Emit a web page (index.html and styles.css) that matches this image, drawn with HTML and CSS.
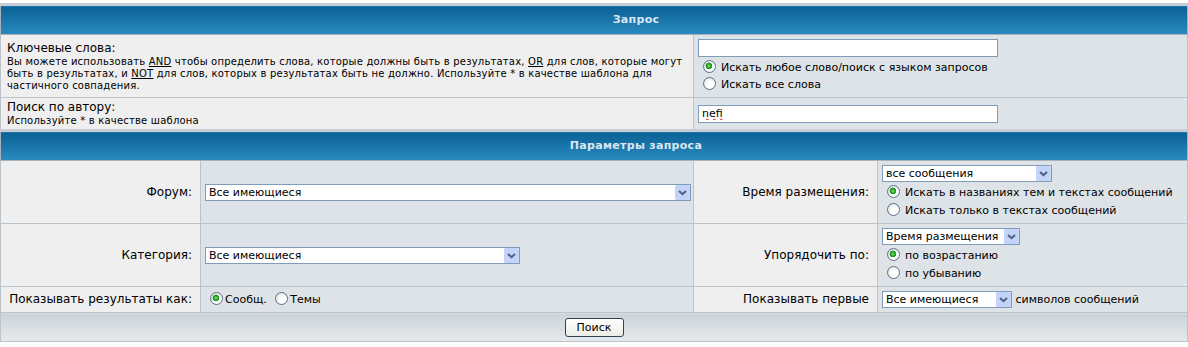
FILE: index.html
```html
<!DOCTYPE html>
<html>
<head>
    <title>Поиск</title>
    <link rel="stylesheet" href="styles.css">
</head>
<body>
    <form class="search-form">
        <table class="forumline">
            <colgroup>
                <col class="c1"><col class="c2"><col class="c3"><col class="c4">
            </colgroup>
            <tr class="head">
                <th colspan="4" class="thHead">Запрос</th>
            </tr>
            <tr class="r-keywords">
                <td colspan="2" class="row1 desc">
                    <div class="gen">Ключевые слова:</div>
                    <div class="gensmall">Вы можете использовать <u>AND</u> чтобы определить слова, которые должны быть в результатах, <u>OR</u> для слов, которые могут<br>быть в результатах, и <u>NOT</u> для слов, которых в результатах быть не должно. Используйте * в качестве шаблона для<br>частичного совпадения.</div>
                </td>
                <td colspan="2" class="row2 ctrl">
                    <input type="text" class="post wide" name="search_keywords">
                    <div class="opt"><label><input type="radio" name="search_terms" checked>Искать любое слово/поиск с языком запросов</label></div>
                    <div class="opt"><label><input type="radio" name="search_terms">Искать все слова</label></div>
                </td>
            </tr>
            <tr class="r-author">
                <td colspan="2" class="row1 desc">
                    <div class="gen">Поиск по автору:</div>
                    <div class="gensmall">Используйте * в качестве шаблона</div>
                </td>
                <td colspan="2" class="row2 ctrl">
                    <input type="text" class="post wide author" name="search_author" value="nefi">
                </td>
            </tr>
            <tr class="head">
                <th colspan="4" class="thHead">Параметры запроса</th>
            </tr>
            <tr class="r-big">
                <td class="row1 lbl">Форум:</td>
                <td class="row2 ctrl">
                    <span class="sel sel-forum">
                        <select name="search_forum"><option>Все имеющиеся</option></select>
                        <span class="sel-btn"><svg width="15" height="15" viewBox="0 0 15 15"><rect x="0" y="0" width="15" height="15" rx="1.5" fill="#c4d3f8"/><path d="M4 6l3.5 3.2L11 6" fill="none" stroke="#4a5f86" stroke-width="2"/></svg></span>
                    </span>
                </td>
                <td class="row1 lbl">Время размещения:</td>
                <td class="row2 ctrl stack">
                    <span class="sel sel-time">
                        <select name="search_time"><option>все сообщения</option></select>
                        <span class="sel-btn"><svg width="15" height="15" viewBox="0 0 15 15"><rect x="0" y="0" width="15" height="15" rx="1.5" fill="#c4d3f8"/><path d="M4 6l3.5 3.2L11 6" fill="none" stroke="#4a5f86" stroke-width="2"/></svg></span>
                    </span>
                    <div class="opt"><label><input type="radio" name="search_fields" checked>Искать в названиях тем и текстах сообщений</label></div>
                    <div class="opt"><label><input type="radio" name="search_fields">Искать только в текстах сообщений</label></div>
                </td>
            </tr>
            <tr class="r-big">
                <td class="row1 lbl">Категория:</td>
                <td class="row2 ctrl">
                    <span class="sel sel-cat">
                        <select name="search_cat"><option>Все имеющиеся</option></select>
                        <span class="sel-btn"><svg width="15" height="15" viewBox="0 0 15 15"><rect x="0" y="0" width="15" height="15" rx="1.5" fill="#c4d3f8"/><path d="M4 6l3.5 3.2L11 6" fill="none" stroke="#4a5f86" stroke-width="2"/></svg></span>
                    </span>
                </td>
                <td class="row1 lbl">Упорядочить по:</td>
                <td class="row2 ctrl stack">
                    <span class="sel sel-sort">
                        <select name="sort_by"><option>Время размещения</option></select>
                        <span class="sel-btn"><svg width="15" height="15" viewBox="0 0 15 15"><rect x="0" y="0" width="15" height="15" rx="1.5" fill="#c4d3f8"/><path d="M4 6l3.5 3.2L11 6" fill="none" stroke="#4a5f86" stroke-width="2"/></svg></span>
                    </span>
                    <div class="opt"><label><input type="radio" name="sort_dir" checked>по возрастанию</label></div>
                    <div class="opt"><label><input type="radio" name="sort_dir">по убыванию</label></div>
                </td>
            </tr>
            <tr class="r-small">
                <td class="row1 lbl">Показывать результаты как:</td>
                <td class="row2 ctrl inline">
                    <label><input type="radio" name="show_results" checked>Сообщ.</label>
                    <label><input type="radio" name="show_results">Темы</label>
                </td>
                <td class="row1 lbl">Показывать первые</td>
                <td class="row2 ctrl inline">
                    <span class="sel sel-chars">
                        <select name="return_chars"><option>Все имеющиеся</option></select>
                        <span class="sel-btn"><svg width="15" height="15" viewBox="0 0 15 15"><rect x="0" y="0" width="15" height="15" rx="1.5" fill="#c4d3f8"/><path d="M4 6l3.5 3.2L11 6" fill="none" stroke="#4a5f86" stroke-width="2"/></svg></span>
                    </span>
                    символов сообщений
                </td>
            </tr>
            <tr class="r-foot">
                <td colspan="4" class="catBottom">
                    <button type="submit" class="liteoption">Поиск</button>
                </td>
            </tr>
        </table>
    </form>
</body>
</html>
```

FILE: styles.css
```css
body {
    margin: 0;
    background: #fff;
    font-family: "DejaVu Sans", Verdana, sans-serif;
    color: #000;
}

.search-form {
    margin: 0;
}

.forumline {
    margin-top: 3px;
    width: 1187px;
    border-collapse: collapse;
    border: 1px solid #a9b1b9;
    table-layout: fixed;
}

col.c1 { width: 200px; }
col.c2 { width: 493px; }
col.c3 { width: 184px; }
col.c4 { width: 310px; }

.thHead {
    height: 28px;
    padding: 0 0 0 84px;
    font-size: 11px;
    line-height: 14px;
    font-weight: bold;
    letter-spacing: .3px;
    color: #dbe7f0;
    text-align: center;
    background: linear-gradient(#0a6195, #2a8bc0);
    border-top: 3px solid #c8ccd6;
    border-bottom: 1px solid #a9b1b9;
}

td {
    border: 1px solid #bcc4cb;
    padding: 0;
    vertical-align: middle;
    font-size: 11px;
    line-height: 17px;
}

.row1 { background: #efefef; }
.row2 { background: #dee3e7; }

.r-keywords { height: 63px; }
.r-author { height: 33px; }
.r-big { height: 63px; }
.r-small { height: 26px; }
.r-foot { height: 28px; }

.desc {
    padding: 0 6px;
}

.gen {
    font-size: 12px;
    line-height: 15px;
}

.gensmall {
    font-size: 10px;
    line-height: 12px;
    letter-spacing: .2px;
    white-space: nowrap;
}

.ctrl {
    padding: 0 4px;
}

.lbl {
    font-size: 12px;
    text-align: right;
    padding-right: 8px;
    white-space: nowrap;
}

.opt {
    line-height: 17px;
    height: 17px;
}

.stack .opt {
    height: 18px;
    line-height: 18px;
}

.post {
    box-sizing: border-box;
    height: 18px;
    border: 1px solid #7f9db9;
    background: #fff;
    font-family: "DejaVu Sans", Verdana, sans-serif;
    font-size: 11px;
    padding: 0 3px;
    margin: 0;
}

.wide {
    width: 300px;
    display: block;
    margin-bottom: 2px;
}

.author {
    margin-bottom: 0;
    text-decoration: underline wavy #e02020;
    text-decoration-thickness: 1px;
}

input[type="radio"] {
    appearance: none;
    -webkit-appearance: none;
    box-sizing: border-box;
    width: 13px;
    height: 13px;
    margin: 0 5px 0 5px;
    border: 1px solid #5b6f88;
    border-radius: 50%;
    background: radial-gradient(circle at 65% 65%, #ffffff 35%, #d6d6cf 100%);
    vertical-align: -2px;
}

input[type="radio"]:checked {
    background:
        radial-gradient(circle at 45% 45%, #7be06a 0, #25a625 2.2px, #1e8f1e 3.2px, transparent 3.6px),
        radial-gradient(circle at 65% 65%, #ffffff 35%, #d6d6cf 100%);
}

.inline input[type="radio"] {
    margin: 0 2px 0 5px;
}

.sel {
    position: relative;
    display: inline-block;
    vertical-align: middle;
}

.stack .sel {
    display: block;
    width: max-content;
    margin-bottom: 2px;
}

.sel select {
    appearance: none;
    -webkit-appearance: none;
    box-sizing: border-box;
    display: block;
    height: 17px;
    margin: 0;
    padding: 0 0 0 3px;
    border: 1px solid #7f9db9;
    border-radius: 0;
    background: #fff;
    font-family: "DejaVu Sans", Verdana, sans-serif;
    font-size: 11px;
    color: #000;
}

.sel-btn {
    position: absolute;
    right: 1px;
    top: 1px;
    width: 15px;
    height: 15px;
    pointer-events: none;
}

.sel-btn svg {
    display: block;
}

.sel-forum select { width: 486px; }
.sel-cat select { width: 315px; }
.sel-time select { width: 170px; }
.sel-sort select { width: 138px; }
.sel-chars select { width: 130px; }

.catBottom {
    height: 28px;
    text-align: center;
    background: linear-gradient(#ccd3d8, #e6e9ec);
    padding: 0;
}

.liteoption {
    box-sizing: border-box;
    height: 19px;
    width: 59px;
    padding: 0;
    vertical-align: middle;
    font-family: "DejaVu Sans", Verdana, sans-serif;
    font-size: 11px;
    color: #000;
    background: linear-gradient(#ffffff, #ecece6);
    border: 1px solid #2f4358;
    border-radius: 3px;
    cursor: pointer;
}
```
